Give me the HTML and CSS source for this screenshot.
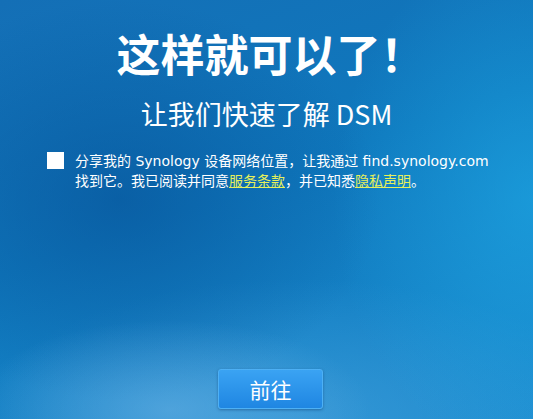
FILE: index.html
```html
<!DOCTYPE html>
<html lang="zh-CN">
<head>
<meta charset="utf-8">
<link rel="stylesheet" href="styles.css">
</head>
<body>
<div class="screen">
  <h1 class="title">这样就可以了！</h1>
  <h2 class="subtitle">让我们快速了解 DSM</h2>
  <div class="consent">
    <span class="checkbox"></span>
    <p class="consent-text">分享我的 Synology 设备网络位置，让我通过 find.synology.com 找到它。我已阅读并同意<a class="link" href="#">服务条款</a>，并已知悉<a class="link" href="#">隐私声明</a>。</p>
  </div>
  <div class="spacer"></div>
  <div class="actions">
    <button class="btn">前往</button>
  </div>
</div>
</body>
</html>
```
FILE: styles.css
```css
html, body {
  margin: 0;
  padding: 0;
}
body {
  width: 533px;
  height: 419px;
  overflow: hidden;
  font-family: "Noto Sans CJK SC", "Noto Sans", sans-serif;
  color: #fff;
}
.screen {
  width: 533px;
  height: 419px;
  box-sizing: border-box;
  display: flex;
  flex-direction: column;
  align-items: center;
  padding-top: 23px;
  background:
    radial-gradient(ellipse 200px 90px at 170px 410px, rgba(110,180,230,0.55), rgba(110,180,230,0) 100%),
    radial-gradient(ellipse 260px 200px at 120px 200px, rgba(6,80,150,0.6), rgba(6,80,150,0) 100%),
    radial-gradient(ellipse 200px 260px at 533px 200px, rgba(30,170,230,0.6), rgba(30,170,230,0) 100%),
    radial-gradient(ellipse 320px 140px at 300px 419px, rgba(70,160,220,0.6), rgba(70,160,220,0) 100%),
    linear-gradient(160deg, #146fb6 0%, #0f78bd 45%, #1b8ccf 100%);
}
.title {
  margin: 0 0 0 8px;
  font-size: 44px;
  font-weight: 700;
  line-height: 60px;
  letter-spacing: 0;
  white-space: nowrap;
}
.subtitle {
  margin: 14px 0 0;
  font-size: 27px;
  font-weight: 400;
  line-height: 34px;
  white-space: nowrap;
}
.consent {
  align-self: stretch;
  display: flex;
  align-items: flex-start;
  margin: 20px 0 0;
  padding: 0 0 0 47px;
}
.checkbox {
  flex: none;
  width: 17px;
  height: 17px;
  background: #fff;
  margin-top: 1px;
}
.consent-text {
  width: 425px;
  margin: 0 0 0 11px;
  font-family: "DejaVu Sans", "Noto Sans CJK SC", sans-serif;
  font-size: 14px;
  line-height: 20px;
}
.link {
  color: #e6f05a;
  text-decoration: underline;
}
.spacer {
  flex: 1;
}
.actions {
  padding: 0 0 10px 8px;
}
.btn {
  width: 105px;
  height: 40px;
  border: 1px solid #4db0f5;
  border-radius: 3px;
  background: linear-gradient(#3aa3f3, #1f86e2);
  color: #fff;
  font-family: "Noto Sans CJK SC", sans-serif;
  font-size: 21px;
  box-shadow: 0 1px 3px rgba(0,40,90,0.4);
  cursor: pointer;
}
```
